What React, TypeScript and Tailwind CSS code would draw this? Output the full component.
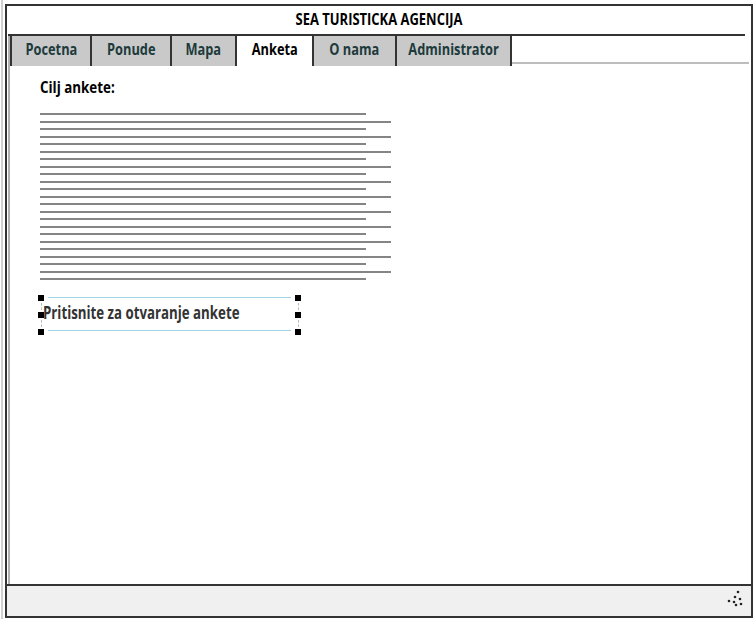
import React from "react";

const FONT = { fontFamily: '"Open Sans", "Noto Sans", "Liberation Sans", sans-serif' };

const tabs = [
  { label: "Pocetna", w: "w-[80px]", active: false },
  { label: "Ponude", w: "w-[80px]", active: false },
  { label: "Mapa", w: "w-[65px]", active: false },
  { label: "Anketa", w: "w-[77px]", active: true },
  { label: "O nama", w: "w-[83px]", active: false },
  { label: "Administrator", w: "w-[117px]", active: false },
];

function Handle() {
  return <div className="w-[6px] h-[6px] bg-black shrink-0" />;
}

function HandleColumn() {
  return (
    <div className="w-[6px] h-full flex flex-col items-center">
      <Handle />
      <div className="flex-1 my-[2px] border-l border-dashed border-[#bbb]" />
      <Handle />
      <div className="flex-1 my-[2px] border-l border-dashed border-[#bbb]" />
      <Handle />
    </div>
  );
}

export default function App() {
  const lines = Array.from({ length: 23 }, (_, i) => i);
  return (
    <div className="w-[755px] h-[619px] bg-white overflow-hidden flex" style={FONT}>
      <div className="ml-[1px] w-[2px] h-full bg-[#d0d0d0]" />
      <div className="ml-[2px] mt-[4px] w-[748px] h-[614px] border-2 border-[#333] flex flex-col">
        <div className="h-[28px] pb-[2px] flex items-center justify-center text-[16px] font-bold text-black leading-none">
          <span className="inline-block scale-x-[0.81] whitespace-nowrap">SEA TURISTICKA AGENCIJA</span>
        </div>
        <div className="ml-[1px] mr-[6px] h-[2px] bg-[#333]" />
        <div className="ml-[1px] border-l-2 border-[#b0b0b0] flex flex-col">
          <div className="h-[30px] flex">
            {tabs.map((t, i) => (
              <div
                key={t.label}
                className={`${t.w} h-full pb-[5px] flex items-center justify-center border-l-2 border-[#333] text-[16px] font-bold leading-none ${
                  i === tabs.length - 1 ? "border-r-2" : ""
                } ${t.active ? "bg-white text-black" : "bg-[#c9c9c9] text-[#1d3a3c]"}`}
              >
                <span className="inline-block scale-x-[0.8] whitespace-nowrap">{t.label}</span>
              </div>
            ))}
            <div className="flex-1 flex flex-col justify-end pb-[2px] mr-[2px]">
              <div className="h-[2px] bg-[#bdbdbd]" />
            </div>
          </div>
          <div className="h-[518px] pl-[30px] pt-[10px]">
            <div className="text-[16.5px] font-bold text-black leading-[22px]">
              <span className="inline-block origin-left scale-x-[0.81] whitespace-nowrap">Cilj ankete:</span>
            </div>
            <div className="mt-[15px] flex flex-col gap-[5.5px]">
              {lines.map((i) => (
                <div
                  key={i}
                  className={`h-[2px] bg-[#858585] ${i % 2 === 0 ? "w-[326px]" : "w-[351px]"}`}
                />
              ))}
            </div>
            <div className="mt-[15px] -ml-[2px] w-[264px] h-[40px] flex">
              <HandleColumn />
              <div className="flex-1 flex flex-col pt-[2px]">
                <div className="mx-[4px] h-[1px] bg-[#9fd6e6]" />
                <div className="h-[32px] pb-[3px] -ml-[1px] flex items-center text-[17px] font-bold text-[#333] leading-none">
                  <span className="inline-block origin-left scale-x-[0.78] whitespace-nowrap">Pritisnite za otvaranje ankete</span>
                </div>
                <div className="mx-[4px] h-[1px] bg-[#9fd6e6]" />
              </div>
              <div className="mr-[1px]">
                <HandleColumn />
              </div>
            </div>
          </div>
        </div>
        <div className="h-[32px] border-t-2 border-[#333] bg-[#f0f0f0] flex justify-end items-start pt-[4px] pr-[8px]">
          <svg width="16" height="18" viewBox="0 0 16 18">
            <circle cx="11" cy="2" r="1.3" fill="#222" />
            <circle cx="8" cy="7" r="1.3" fill="#222" />
            <circle cx="13" cy="9" r="1.3" fill="#222" />
            <circle cx="2" cy="11" r="1.3" fill="#222" />
            <circle cx="7" cy="12" r="1.3" fill="#222" />
            <circle cx="14" cy="14" r="1.3" fill="#222" />
            <circle cx="9" cy="15" r="1.3" fill="#222" />
          </svg>
        </div>
      </div>
    </div>
  );
}
